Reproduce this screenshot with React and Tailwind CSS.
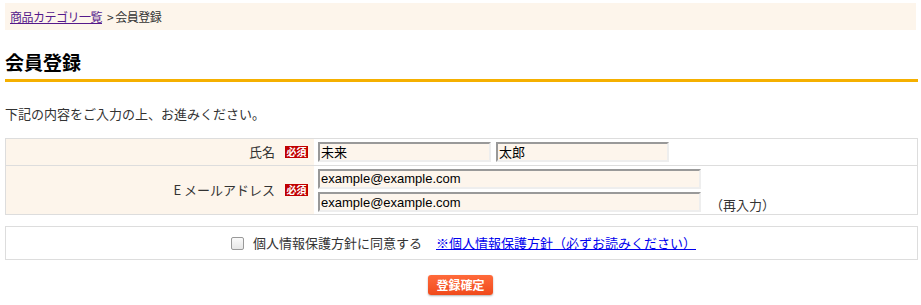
export default function App() {
  const font = { fontFamily: '"Noto Sans CJK JP", "Liberation Sans", sans-serif' };
  return (
    <div className="w-[921px] h-[305px] bg-white text-[#333] px-[5px] pt-[3px]" style={font}>
      <div className="h-[27px] bg-[#fdf5eb] flex items-center px-[5px] text-[12px] tracking-[-0.5px]">
        <a className="text-[#551a8b] underline">商品カテゴリ一覧</a>
        <span className="ml-[5px] text-[#333]">&gt; 会員登録</span>
      </div>
      <h1 className="mt-[18px] text-[19px] font-bold text-black leading-[28px] pb-[3px] border-b-[3px] border-[#f5b000] w-[913px]">会員登録</h1>
      <p className="mt-[22px] text-[13px] leading-[20px]">下記の内容をご入力の上、お進みください。</p>
      <div className="mt-[14px] w-[913px] border border-[#ddd] text-[13px]">
        <div className="flex border-b border-[#ddd] h-[27px]">
          <div className="w-[308px] bg-[#fdf5eb] flex items-center justify-end pr-[6px] gap-[10px]">
            <span>氏名</span>
            <Badge />
          </div>
          <div className="flex items-center pl-[4px] gap-[5px]">
            <Input w="w-[173px]" v="未来" />
            <Input w="w-[173px]" v="太郎" />
          </div>
        </div>
        <div className="flex h-[48px]">
          <div className="w-[308px] bg-[#fdf5eb] flex items-center justify-end pr-[6px] gap-[10px]">
            <span>E メールアドレス</span>
            <Badge />
          </div>
          <div className="flex flex-col pl-[4px] pt-[3px] gap-[2px]">
            <Input w="w-[383px]" v="example@example.com" />
            <div className="flex items-center">
              <Input w="w-[383px]" v="example@example.com" />
              <span className="ml-[9px] mt-[4px]">（再入力）</span>
            </div>
          </div>
        </div>
      </div>
      <div className="mt-[11px] w-[913px] h-[34px] border border-[#ddd] flex items-center justify-center text-[13px]">
        <span className="inline-block w-[13px] h-[13px] border border-[#999] rounded-[2px] bg-gradient-to-b from-[#fafafa] to-[#e6e6e6] mr-[9px] ml-[4px]"></span>
        <span>個人情報保護方針に同意する</span>
        <a className="ml-[14px] text-[#0000ee] underline">※個人情報保護方針（必ずお読みください）</a>
      </div>
      <div className="flex justify-center mt-[15px]">
        <button className="w-[65px] h-[20px] rounded-[3px] bg-gradient-to-b from-[#ff6a3a] to-[#f04a1a] text-white text-[12px] font-bold leading-[20px] shadow-[0_1px_2px_rgba(0,0,0,0.3)]">登録確定</button>
      </div>
    </div>
  );
}

function Badge() {
  return (
    <span
      className="inline-flex items-center justify-center bg-[#c00000] text-white text-[10px] leading-[12px] w-[23px] h-[12px] font-bold"
      style={{ fontFamily: '"Noto Sans CJK JP", sans-serif' }}
    >
      必須
    </span>
  );
}

function Input({ w, v }) {
  return (
    <div
      className={`${w} h-[20px] bg-[#fdf5ec] border-2 border-t-[#999] border-l-[#999] border-b-[#eee] border-r-[#eee] flex items-center pl-[1px] text-[13px] text-black leading-none`}
      style={{ fontFamily: '"Liberation Sans", "Noto Sans CJK JP", sans-serif' }}
    >
      {v}
    </div>
  );
}
